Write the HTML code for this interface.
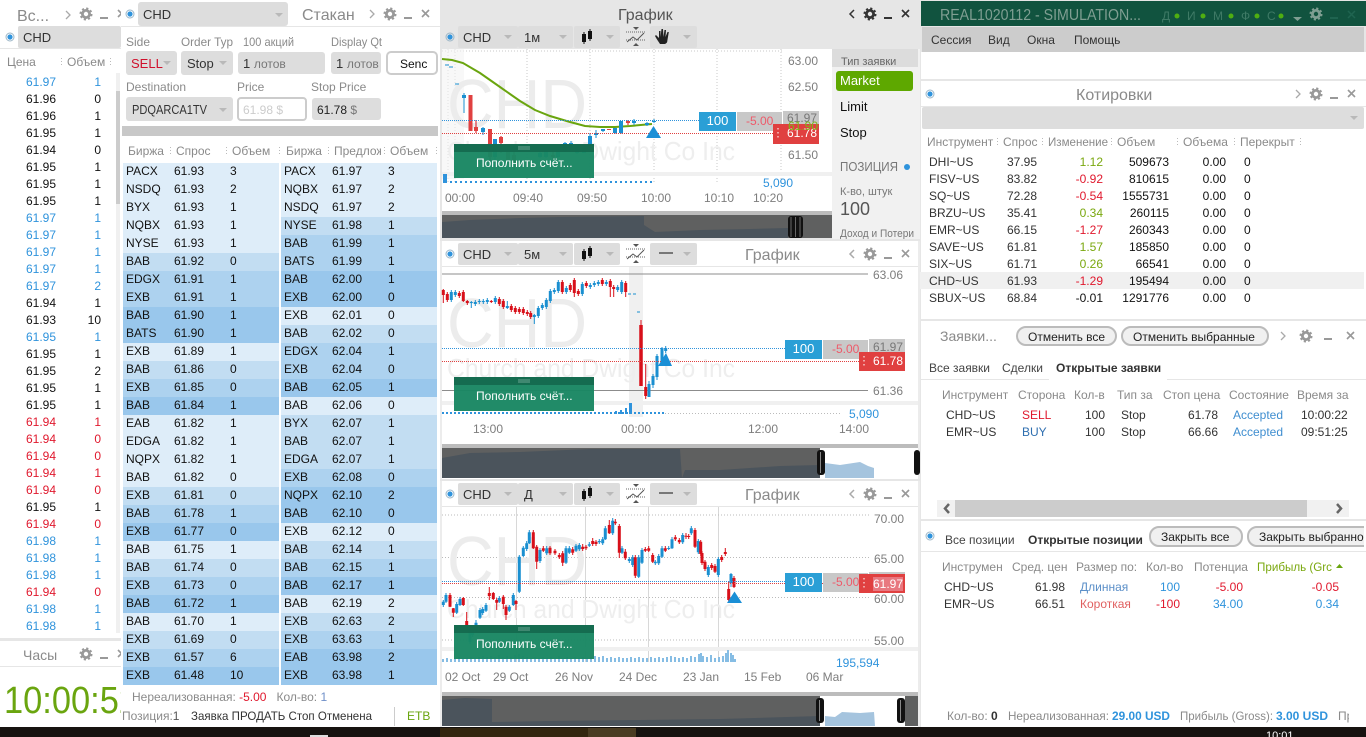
<!DOCTYPE html>
<html lang="ru"><head><meta charset="utf-8"><title>Terminal</title>
<style>
html,body{margin:0;padding:0;background:#e6e6e6;overflow:hidden}
svg{display:block}
text{font-family:"Liberation Sans","DejaVu Sans",sans-serif;font-size:12px;fill:#111}
.h text,text.h{fill:#8a8a8a}
.b text,text.b{fill:#2f93dc}
.r text,text.r{fill:#e0182d}
.k text{fill:#111}
.g text,text.g{fill:#6aa50f}
.e{text-anchor:end}
.t16{font-size:16px;fill:#8a8a8a}
.ax{font-size:12px;fill:#7d7d7d}
.wm1{font-size:70px;fill:#ececec}
.wm2{font-size:26px;fill:#eeeeee}
.w{fill:#fff}
.lb{fill:#fff;font-size:12px}
.pk{fill:#ee5a6a;font-size:12px}
</style></head><body>
<svg width="1366" height="737" viewBox="0 0 1366 737" xmlns="http://www.w3.org/2000/svg">
<defs>
<g id="gear"><circle r="3.6" fill="none" stroke="currentColor" stroke-width="2.8"/><circle r="5.4" fill="none" stroke="currentColor" stroke-width="2.2" stroke-dasharray="2.1 2.14"/></g>
<g id="ctl"><use href="#gear"/><rect x="14" y="3" width="8" height="2" fill="currentColor"/><path d="M32 -4l7 7M39 -4l-7 7" stroke="currentColor" stroke-width="1.6" fill="none"/></g>
<path id="arr" d="M0 0h8l-4 4z" fill="#b9b9b9"/>
<g id="radio"><circle r="4" fill="none" stroke="#9db7c8" stroke-width="1"/><circle r="2.6" fill="#2f93dc"/></g>
<g id="cnd"><path d="M0 -3V9M6 -6V6" stroke="#111" stroke-width="1"/><rect x="-2" y="-1" width="4" height="8" fill="#111"/><rect x="4" y="-4" width="4" height="8" fill="#111"/></g>
<g id="tool"><path d="M0 4h20M0 -4h20" stroke="#666" stroke-width="1" stroke-dasharray="1 1" fill="none"/><path d="M1 6l6 -5 4 3 7 -7" stroke="#555" fill="none"/><path d="M7 -9h6l-3 3zM7 10h6l-3 -3z" fill="#555"/></g>
<g id="banner"><rect width="140" height="34" fill="#1a8763" opacity=".97"/><rect width="140" height="8" fill="#156b50" opacity=".97"/><path d="M64 3h12M64 5h12" stroke="#6aa592" stroke-width="1"/><text x="22" y="23" class="w" style="fill:#fff">Пополнить счёт...</text></g>
</defs>

<!-- desktop strip -->
<rect y="727" width="1366" height="10" fill="#171310"/>
<rect x="440" y="728" width="150" height="9" fill="#33260f"/><rect x="588" y="728" width="48" height="9" fill="#4a3c22"/>
<rect x="310" y="735" width="18" height="2" fill="#ddd"/>
<text x="1266" y="739" style="fill:#fff;font-size:11px">10:01</text>

<!-- LEFT PANEL -->
<rect x="0" y="0" width="121" height="638" fill="#fff"/>
<rect x="0" y="48" width="121" height="1" fill="#e6e6e6"/>
<rect x="18" y="26" width="103" height="22" rx="2" fill="#ddd"/>
<use href="#radio" x="10" y="37"/>
<text x="17" y="21" class="t16">Вс...</text>
<path d="M66 11l4 4 -4 4" fill="none" stroke="#aaa" stroke-width="1.3"/>
<use href="#ctl" x="86" y="14" color="#999"/>
<text x="23" y="42" style="font-size:13px;fill:#333">CHD</text>
<g class="h"><text x="7" y="66">Цена</text><text x="67" y="66">Объем</text></g>
<path d="M61.500 58V66M110.500 58V66" stroke="#bbb" stroke-dasharray="1 2"/>
<rect x="116" y="73" width="4" height="560" fill="#f0f0f0"/><rect x="116" y="91" width="4" height="113" fill="#ccc"/>
<g class="b"><text x="26" y="86">61.97</text><text x="101" y="86" class="e">1</text></g>
<g class="k">
<text x="26" y="103">61.96</text><text x="101" y="103" class="e">0</text>
<text x="26" y="120">61.96</text><text x="101" y="120" class="e">1</text>
<text x="26" y="137">61.95</text><text x="101" y="137" class="e">1</text>
<text x="26" y="154">61.94</text><text x="101" y="154" class="e">0</text>
<text x="26" y="171">61.95</text><text x="101" y="171" class="e">1</text>
<text x="26" y="188">61.95</text><text x="101" y="188" class="e">1</text>
<text x="26" y="205">61.95</text><text x="101" y="205" class="e">1</text>
</g>
<g class="b">
<text x="26" y="222">61.97</text><text x="101" y="222" class="e">1</text>
<text x="26" y="239">61.97</text><text x="101" y="239" class="e">1</text>
<text x="26" y="256">61.97</text><text x="101" y="256" class="e">1</text>
<text x="26" y="273">61.97</text><text x="101" y="273" class="e">1</text>
<text x="26" y="290">61.97</text><text x="101" y="290" class="e">2</text>
</g>
<g class="k">
<text x="26" y="307">61.94</text><text x="101" y="307" class="e">1</text>
<text x="26" y="324">61.93</text><text x="101" y="324" class="e">10</text>
</g>
<g class="b"><text x="26" y="341">61.95</text><text x="101" y="341" class="e">1</text></g>
<g class="k">
<text x="26" y="358">61.95</text><text x="101" y="358" class="e">1</text>
<text x="26" y="375">61.95</text><text x="101" y="375" class="e">2</text>
<text x="26" y="392">61.95</text><text x="101" y="392" class="e">1</text>
<text x="26" y="409">61.95</text><text x="101" y="409" class="e">1</text>
</g>
<g class="r">
<text x="26" y="426">61.94</text><text x="101" y="426" class="e">1</text>
<text x="26" y="443">61.94</text><text x="101" y="443" class="e">0</text>
<text x="26" y="460">61.94</text><text x="101" y="460" class="e">0</text>
<text x="26" y="477">61.94</text><text x="101" y="477" class="e">1</text>
<text x="26" y="494">61.94</text><text x="101" y="494" class="e">0</text>
</g>
<g class="k"><text x="26" y="511">61.95</text><text x="101" y="511" class="e">1</text></g>
<g class="r"><text x="26" y="528">61.94</text><text x="101" y="528" class="e">0</text></g>
<g class="b">
<text x="26" y="545">61.98</text><text x="101" y="545" class="e">1</text>
<text x="26" y="562">61.98</text><text x="101" y="562" class="e">1</text>
<text x="26" y="579">61.98</text><text x="101" y="579" class="e">1</text>
</g>
<g class="r"><text x="26" y="596">61.94</text><text x="101" y="596" class="e">0</text></g>
<g class="b">
<text x="26" y="613">61.98</text><text x="101" y="613" class="e">1</text>
<text x="26" y="630">61.98</text><text x="101" y="630" class="e">1</text>
</g>
<!-- Clock -->
<rect x="0" y="641" width="121" height="86" fill="#fff"/>
<rect x="0" y="666" width="121" height="1" fill="#e6e6e6"/>
<text x="23" y="660" style="font-size:14px;fill:#8a8a8a">Часы</text>
<use href="#ctl" x="86" y="654" color="#999"/>
<text x="4" y="713" style="font-size:38px;fill:#6aa50f" textLength="134" lengthAdjust="spacingAndGlyphs">10:00:52</text>

<!-- ORDER BOOK PANEL -->
<rect x="121" y="0" width="319" height="727" fill="#fff"/>
<rect x="121" y="26" width="319" height="1" fill="#e6e6e6"/>
<rect x="138" y="2" width="150" height="24" rx="3" fill="#ddd"/>
<use href="#radio" x="130" y="14"/>
<text x="143" y="19" style="font-size:13px;fill:#333">CHD</text>
<use href="#arr" x="275" y="13"/>
<text x="302" y="20" class="t16">Стакан</text>
<path d="M370 10l4 4 -4 4" fill="none" stroke="#aaa" stroke-width="1.3"/>
<use href="#ctl" x="390" y="14" color="#999"/>
<g class="h">
<text x="126" y="46">Side</text><text x="181" y="46" textLength="52" lengthAdjust="spacingAndGlyphs">Order Typ</text><text x="243" y="46" textLength="51" lengthAdjust="spacingAndGlyphs">100 акций</text><text x="331" y="46" textLength="51" lengthAdjust="spacingAndGlyphs">Display Qt</text>
<text x="126" y="91">Destination</text><text x="237" y="91">Price</text><text x="311" y="91">Stop Price</text>
</g>
<rect x="126" y="51" width="51" height="24" rx="3" fill="#ddd"/><text x="131" y="68" style="font-size:13px;fill:#d0102c">SELL</text><use href="#arr" x="163" y="61"/>
<rect x="181" y="51" width="52" height="24" rx="3" fill="#ddd"/><text x="187" y="68" style="font-size:13px;fill:#333">Stop</text><use href="#arr" x="219" y="61"/>
<rect x="238" y="52" width="87" height="22" rx="3" fill="#ddd"/><text x="243" y="68" style="font-size:13px;fill:#333">1 <tspan style="fill:#777;font-size:12px">лотов</tspan></text>
<rect x="331" y="52" width="50" height="22" rx="3" fill="#ddd"/><text x="336" y="68" style="font-size:13px;fill:#333">1 <tspan style="fill:#777;font-size:12px">лотов</tspan></text>
<rect x="387" y="52" width="50" height="22" rx="4" fill="#fff" stroke="#ccc" stroke-width="2"/><text x="400" y="68" style="font-size:12px">Senc</text>
<rect x="126" y="97" width="107" height="24" rx="3" fill="#ddd"/><text x="132" y="114" style="font-size:13px;fill:#333" textLength="75" lengthAdjust="spacingAndGlyphs">PDQARCA1TV</text><use href="#arr" x="219" y="108"/>
<rect x="238" y="98" width="68" height="22" rx="3" fill="#fff" stroke="#ccc" stroke-width="2"/><text x="243" y="114" style="font-size:12px;fill:#ccc">61.98 $</text>
<rect x="312" y="98" width="69" height="22" rx="3" fill="#ddd"/><text x="317" y="114" style="font-size:12px;fill:#222">61.78 <tspan style="fill:#777">$</tspan></text>
<rect x="122" y="126" width="316" height="10" fill="#c8c8c8"/>
<g class="h"><text x="128" y="155">Биржа</text><text x="176" y="155">Спрос</text><text x="232" y="155">Объем</text><text x="286" y="155">Биржа</text><text x="334" y="155">Предлож</text><text x="390" y="155">Объем</text></g>
<rect x="381" y="145" width="5" height="14" fill="#fff"/>
<path d="M170.500 147V155M226.500 147V155M279.500 147V155M328.500 147V155M384.500 147V155M436.500 147V155" stroke="#bbb" stroke-dasharray="1 2"/>
<!-- bid stripes -->
<g fill="#deedf9"><rect x="123" y="163" width="156" height="90"/><rect x="123" y="343" width="156" height="18"/><rect x="123" y="415" width="156" height="72"/><rect x="123" y="541" width="156" height="18"/><rect x="123" y="613" width="156" height="18"/></g>
<g fill="#c2ddf2"><rect x="123" y="253" width="156" height="18"/><rect x="123" y="361" width="156" height="18"/><rect x="123" y="487" width="156" height="18"/><rect x="123" y="559" width="156" height="18"/><rect x="123" y="631" width="156" height="18"/></g>
<g fill="#add2ef"><rect x="123" y="271" width="156" height="36"/><rect x="123" y="379" width="156" height="18"/><rect x="123" y="505" width="156" height="18"/><rect x="123" y="577" width="156" height="18"/><rect x="123" y="649" width="156" height="18"/></g>
<g fill="#99c7ec"><rect x="123" y="307" width="156" height="36"/><rect x="123" y="397" width="156" height="18"/><rect x="123" y="523" width="156" height="18"/><rect x="123" y="595" width="156" height="18"/><rect x="123" y="667" width="156" height="18"/></g>
<!-- ask stripes -->
<g fill="#deedf9"><rect x="281" y="163" width="156" height="54"/><rect x="281" y="307" width="156" height="18"/><rect x="281" y="397" width="156" height="18"/><rect x="281" y="523" width="156" height="18"/><rect x="281" y="595" width="156" height="18"/></g>
<g fill="#c2ddf2"><rect x="281" y="217" width="156" height="18"/><rect x="281" y="325" width="156" height="18"/><rect x="281" y="415" width="156" height="54"/><rect x="281" y="541" width="156" height="18"/><rect x="281" y="613" width="156" height="18"/></g>
<g fill="#add2ef"><rect x="281" y="235" width="156" height="36"/><rect x="281" y="343" width="156" height="36"/><rect x="281" y="469" width="156" height="18"/><rect x="281" y="559" width="156" height="18"/><rect x="281" y="631" width="156" height="18"/></g>
<g fill="#99c7ec"><rect x="281" y="271" width="156" height="36"/><rect x="281" y="379" width="156" height="18"/><rect x="281" y="487" width="156" height="36"/><rect x="281" y="577" width="156" height="18"/><rect x="281" y="649" width="156" height="36"/></g>
<g>
<text y="175"><tspan x="126">PACX</tspan><tspan x="174">61.93</tspan><tspan x="230">3</tspan><tspan x="284">PACX</tspan><tspan x="332">61.97</tspan><tspan x="388">3</tspan></text>
<text y="193"><tspan x="126">NSDQ</tspan><tspan x="174">61.93</tspan><tspan x="230">2</tspan><tspan x="284">NQBX</tspan><tspan x="332">61.97</tspan><tspan x="388">2</tspan></text>
<text y="211"><tspan x="126">BYX</tspan><tspan x="174">61.93</tspan><tspan x="230">1</tspan><tspan x="284">NSDQ</tspan><tspan x="332">61.97</tspan><tspan x="388">2</tspan></text>
<text y="229"><tspan x="126">NQBX</tspan><tspan x="174">61.93</tspan><tspan x="230">1</tspan><tspan x="284">NYSE</tspan><tspan x="332">61.98</tspan><tspan x="388">1</tspan></text>
<text y="247"><tspan x="126">NYSE</tspan><tspan x="174">61.93</tspan><tspan x="230">1</tspan><tspan x="284">BAB</tspan><tspan x="332">61.99</tspan><tspan x="388">1</tspan></text>
<text y="265"><tspan x="126">BAB</tspan><tspan x="174">61.92</tspan><tspan x="230">0</tspan><tspan x="284">BATS</tspan><tspan x="332">61.99</tspan><tspan x="388">1</tspan></text>
<text y="283"><tspan x="126">EDGX</tspan><tspan x="174">61.91</tspan><tspan x="230">1</tspan><tspan x="284">BAB</tspan><tspan x="332">62.00</tspan><tspan x="388">1</tspan></text>
<text y="301"><tspan x="126">EXB</tspan><tspan x="174">61.91</tspan><tspan x="230">1</tspan><tspan x="284">EXB</tspan><tspan x="332">62.00</tspan><tspan x="388">0</tspan></text>
<text y="319"><tspan x="126">BAB</tspan><tspan x="174">61.90</tspan><tspan x="230">1</tspan><tspan x="284">EXB</tspan><tspan x="332">62.01</tspan><tspan x="388">0</tspan></text>
<text y="337"><tspan x="126">BATS</tspan><tspan x="174">61.90</tspan><tspan x="230">1</tspan><tspan x="284">BAB</tspan><tspan x="332">62.02</tspan><tspan x="388">0</tspan></text>
<text y="355"><tspan x="126">EXB</tspan><tspan x="174">61.89</tspan><tspan x="230">1</tspan><tspan x="284">EDGX</tspan><tspan x="332">62.04</tspan><tspan x="388">1</tspan></text>
<text y="373"><tspan x="126">BAB</tspan><tspan x="174">61.86</tspan><tspan x="230">0</tspan><tspan x="284">EXB</tspan><tspan x="332">62.04</tspan><tspan x="388">0</tspan></text>
<text y="391"><tspan x="126">EXB</tspan><tspan x="174">61.85</tspan><tspan x="230">0</tspan><tspan x="284">BAB</tspan><tspan x="332">62.05</tspan><tspan x="388">1</tspan></text>
<text y="409"><tspan x="126">BAB</tspan><tspan x="174">61.84</tspan><tspan x="230">1</tspan><tspan x="284">BAB</tspan><tspan x="332">62.06</tspan><tspan x="388">0</tspan></text>
<text y="427"><tspan x="126">EAB</tspan><tspan x="174">61.82</tspan><tspan x="230">1</tspan><tspan x="284">BYX</tspan><tspan x="332">62.07</tspan><tspan x="388">1</tspan></text>
<text y="445"><tspan x="126">EDGA</tspan><tspan x="174">61.82</tspan><tspan x="230">1</tspan><tspan x="284">BAB</tspan><tspan x="332">62.07</tspan><tspan x="388">1</tspan></text>
<text y="463"><tspan x="126">NQPX</tspan><tspan x="174">61.82</tspan><tspan x="230">1</tspan><tspan x="284">EDGA</tspan><tspan x="332">62.07</tspan><tspan x="388">1</tspan></text>
<text y="481"><tspan x="126">BAB</tspan><tspan x="174">61.82</tspan><tspan x="230">0</tspan><tspan x="284">EXB</tspan><tspan x="332">62.08</tspan><tspan x="388">0</tspan></text>
<text y="499"><tspan x="126">EXB</tspan><tspan x="174">61.81</tspan><tspan x="230">0</tspan><tspan x="284">NQPX</tspan><tspan x="332">62.10</tspan><tspan x="388">2</tspan></text>
<text y="517"><tspan x="126">BAB</tspan><tspan x="174">61.78</tspan><tspan x="230">1</tspan><tspan x="284">BAB</tspan><tspan x="332">62.10</tspan><tspan x="388">0</tspan></text>
<text y="535"><tspan x="126">EXB</tspan><tspan x="174">61.77</tspan><tspan x="230">0</tspan><tspan x="284">EXB</tspan><tspan x="332">62.12</tspan><tspan x="388">0</tspan></text>
<text y="553"><tspan x="126">BAB</tspan><tspan x="174">61.75</tspan><tspan x="230">1</tspan><tspan x="284">BAB</tspan><tspan x="332">62.14</tspan><tspan x="388">1</tspan></text>
<text y="571"><tspan x="126">BAB</tspan><tspan x="174">61.74</tspan><tspan x="230">0</tspan><tspan x="284">BAB</tspan><tspan x="332">62.15</tspan><tspan x="388">1</tspan></text>
<text y="589"><tspan x="126">EXB</tspan><tspan x="174">61.73</tspan><tspan x="230">0</tspan><tspan x="284">BAB</tspan><tspan x="332">62.17</tspan><tspan x="388">1</tspan></text>
<text y="607"><tspan x="126">BAB</tspan><tspan x="174">61.72</tspan><tspan x="230">1</tspan><tspan x="284">BAB</tspan><tspan x="332">62.19</tspan><tspan x="388">2</tspan></text>
<text y="625"><tspan x="126">BAB</tspan><tspan x="174">61.70</tspan><tspan x="230">1</tspan><tspan x="284">EXB</tspan><tspan x="332">62.63</tspan><tspan x="388">2</tspan></text>
<text y="643"><tspan x="126">EXB</tspan><tspan x="174">61.69</tspan><tspan x="230">0</tspan><tspan x="284">EXB</tspan><tspan x="332">63.63</tspan><tspan x="388">1</tspan></text>
<text y="661"><tspan x="126">EXB</tspan><tspan x="174">61.57</tspan><tspan x="230">6</tspan><tspan x="284">EAB</tspan><tspan x="332">63.98</tspan><tspan x="388">2</tspan></text>
<text y="679"><tspan x="126">EXB</tspan><tspan x="174">61.48</tspan><tspan x="230">10</tspan><tspan x="284">EXB</tspan><tspan x="332">63.98</tspan><tspan x="388">1</tspan></text>
</g>
<text x="132" y="701" class="h">Нереализованная: <tspan style="fill:#e0182d">-5.00</tspan><tspan dx="10">Кол-во: </tspan><tspan style="fill:#6f8fc8">1</tspan></text>
<text x="122" y="720" class="h">Позиция:<tspan style="fill:#555">1</tspan></text>
<text x="191" y="720" style="fill:#333" textLength="181" lengthAdjust="spacingAndGlyphs">Заявка ПРОДАТЬ Стоп Отменена</text>
<rect x="394" y="707" width="1" height="19" fill="#ccc"/>
<text x="407" y="720" class="g">ETB</text>

<!-- CHART 1 -->
<rect x="440" y="0" width="480" height="241" fill="#e6e6e6"/>
<rect x="442" y="49" width="390" height="162" fill="#fff"/>
<text x="618" y="20" style="font-size:16px;fill:#555">График</text>
<path d="M854 10l-4 4 4 4" fill="none" stroke="#333" stroke-width="1.5"/>
<use href="#ctl" x="870" y="14" color="#333"/>
<use href="#radio" x="450" y="37"/>
<rect x="458" y="26" width="60" height="22" rx="2" fill="#ddd"/><rect x="518" y="26" width="55" height="22" rx="2" fill="#ddd"/><rect x="574" y="26" width="46" height="22" rx="2" fill="#ddd"/><rect x="650" y="26" width="47" height="22" rx="2" fill="#ddd"/>
<text x="463" y="42" style="font-size:13px;fill:#333">CHD</text><use href="#arr" x="504" y="35"/>
<text x="524" y="42" style="font-size:13px;fill:#333">1м</text><use href="#arr" x="559" y="35"/>
<use href="#cnd" x="584" y="35"/><use href="#arr" x="606" y="35"/>
<use href="#tool" x="626" y="36"/>
<path d="M660 44c-2-3-4-6-5-8l1-1 3 3v-7h1.500v6l1-8h1.500l.5 8 1-7h1.500l-.5 7 2-5h1.300l-1.500 9c0 2-2 3-3 3z" fill="#222"/>
<use href="#arr" x="683" y="35"/>
<g stroke="#c9c9c9" stroke-width="1" stroke-dasharray="1 2" fill="none">
<path d="M442 51H782M527 49V182M590 49V182M654 49V182M717 49V182M781 49V182M448 49V182M455 49V182"/>
</g>
<rect x="442" y="49" width="22" height="130" fill="#f3f3f3" opacity=".6"/>
<text x="447" y="128" class="wm1" textLength="140" lengthAdjust="spacingAndGlyphs">CHD</text>
<text x="447" y="160" class="wm2" textLength="288" lengthAdjust="spacingAndGlyphs">Church and Dwight Co Inc</text>
<rect x="442" y="172" width="390" height="4" fill="#f0f0f0"/>
<path d="M442 59L452 60L463 63L480 73L500 87L520 101L535 110L550 116L570 122L585 126L600 127L615 127L630 126L652 124" fill="none" stroke="#6aa50f" stroke-width="2"/>
<g stroke="#1a8fd0" fill="none">
<path d="M464 93V113M483 127V135M495 139V160M540 152V158M546 150V158M558 149V158M565 142V152M571 141V147M577 145V154M590 133V146M596 130V138M603 129V132M615 128V134M621 121V134M634 119V125M647 122V126M654 119V123M445 65h4M449 67h4M455 84h4"/>
<path d="M464 95V98M483 128V132M495 139V157M540 153V157M546 150V157M558 149V157M565 143V151M571 143V146M577 145V153M584 148V153M590 136V145M596 133V135M603 129V131M615 128V133M621 121V133M634 121V123M647 123V125M654 121V122" stroke-width="4"/>
</g>
<g stroke="#d8101a" fill="none">
<path d="M476 120V133M490 129V165M501 136V153M508 145V165M514 152V170M553 148V160M628 120V125"/>
<path d="M470.500 95V131M476 127V131M490 129V157M501 137V143M508 145V160M514 155V165M553 155V157M609 129V130M628 121V123" stroke-width="4" stroke="#e04040"/>
</g>
<path d="M442 120.500H700" stroke="#2f93dc" stroke-dasharray="1 1"/><path d="M442 133.500H773" stroke="#e04040" stroke-dasharray="1 1"/>
<path d="M445 182H655" stroke="#2f93dc" stroke-width="2" stroke-dasharray="2 3"/><rect x="443" y="174" width="4" height="9" fill="#2f93dc"/>
<path d="M646 138L653.500 126L661 138z" fill="#1a8fd6"/>
<use href="#banner" x="454" y="144"/>
<text x="788" y="65" class="ax">63.00</text><text x="788" y="91" class="ax">62.50</text><text x="788" y="159" class="ax">61.50</text>
<rect x="699" y="112" width="37" height="19" fill="#2a9fd6"/><text x="717.500" y="125" text-anchor="middle" class="lb" style="font-size:13px">100</text>
<rect x="737" y="112" width="45" height="19" fill="#c8c8c8"/><text x="746" y="125" class="pk">-5.00</text>
<rect x="783" y="111" width="36" height="19" fill="#c8c8c8"/><text x="787" y="122" style="fill:#777;font-size:12px">61.97</text>
<rect x="773" y="124" width="46" height="20" fill="#e04040"/><path d="M778 128v1.500M778 132v1.500M778 136v1.500" stroke="#fff" stroke-width="1.500" opacity=".7"/>
<text x="787" y="137" class="lb">61.78</text><text x="788" y="130" style="fill:#7cb518;font-size:12px">61.90</text>
<text x="763" y="187" class="b">5,090</text>
<text x="445" y="202" class="ax">00:00</text><text x="513" y="202" class="ax">09:40</text><text x="577" y="202" class="ax">09:50</text><text x="641" y="202" class="ax">10:00</text><text x="704" y="202" class="ax">10:10</text><text x="753" y="202" class="ax">10:20</text>
<rect x="442" y="211" width="390" height="4" fill="#bcbcbc"/><rect x="442" y="215" width="390" height="23" fill="#5f6060"/>
<path d="M442 238V222L470 220L520 218L560 217L644 216V238z" fill="#4b545c"/>
<path d="M644 238V225L655 232L700 230L750 229L788 228V238z" fill="#4b545c"/>
<rect x="788" y="216" width="15" height="22" rx="3" fill="#111"/><path d="M791 217V237M795.500 217V237M800 217V237" stroke="#666"/>
<!-- sidebar -->
<rect x="832" y="49" width="88" height="190" fill="#f1f1f1"/><rect x="832" y="49" width="86" height="18" fill="#dcdcdc"/>
<text x="841" y="65" style="font-size:11px;fill:#666">Тип заявки</text>
<rect x="836" y="71" width="77" height="20" rx="3" fill="#5ea800"/><text x="840" y="85" style="font-size:13px;fill:#fff">Market</text>
<text x="840" y="111" style="font-size:13px">Limit</text><text x="840" y="137" style="font-size:13px">Stop</text>
<text x="840" y="171" style="font-size:13px;fill:#777" textLength="58" lengthAdjust="spacingAndGlyphs">ПОЗИЦИЯ</text><circle cx="907" cy="167" r="3" fill="#2f93dc"/>
<text x="840" y="195" style="font-size:11px;fill:#777">К-во, штук</text>
<text x="840" y="215" style="font-size:18px;fill:#555">100</text>
<text x="840" y="237" style="font-size:11px;fill:#777" textLength="74" lengthAdjust="spacingAndGlyphs">Доход и Потери</text>

<!-- CHART 2 -->
<rect x="440" y="241" width="480" height="240" fill="#fff"/>
<rect x="440" y="239" width="480" height="2" fill="#e6e6e6"/>
<rect x="440" y="266" width="480" height="1" fill="#e6e6e6"/>
<rect x="440" y="241" width="2" height="240" fill="#ececec"/><rect x="918" y="241" width="2" height="240" fill="#ececec"/>
<use href="#radio" x="450" y="254"/>
<rect x="458" y="243" width="60" height="22" rx="2" fill="#ddd"/><rect x="518" y="243" width="55" height="22" rx="2" fill="#ddd"/><rect x="574" y="243" width="46" height="22" rx="2" fill="#ddd"/><rect x="650" y="243" width="47" height="22" rx="2" fill="#ddd"/>
<text x="463" y="259" style="font-size:13px;fill:#333">CHD</text><use href="#arr" x="504" y="252"/>
<text x="524" y="259" style="font-size:13px;fill:#333">5м</text><use href="#arr" x="559" y="252"/>
<use href="#cnd" x="584" y="252"/><use href="#arr" x="606" y="252"/>
<use href="#tool" x="626" y="253"/>
<rect x="659" y="252" width="14" height="2" fill="#777"/><use href="#arr" x="683" y="252"/>
<text x="745" y="260" class="t16">График</text>
<path d="M854 250l-4 4 4 4" fill="none" stroke="#aaa" stroke-width="1.500"/>
<use href="#ctl" x="870" y="254" color="#999"/>
<rect x="629" y="267" width="14" height="150" fill="#f0f0f0"/>
<text x="447" y="347" class="wm1" textLength="140" lengthAdjust="spacingAndGlyphs">CHD</text>
<text x="447" y="377" class="wm2" textLength="288" lengthAdjust="spacingAndGlyphs">Church and Dwight Co Inc</text>
<rect x="442" y="401" width="476" height="4" fill="#f0f0f0"/>
<path d="M442 274H868M442 390.500H868" stroke="#8c8c8c" stroke-width="1"/>
<g fill="none" stroke="#1a8fd0">
<path d="M451.300 290V302M455.300 290V297M471.300 301V308M475.300 300V306M479.300 299V304M483.300 299V304M487.300 298V304M495.300 296V304M507.300 301V309M534.300 314V324M538.300 306V318M542.300 303V310M546.300 298V309M550.300 289V303M554.300 288V294M558.300 280V293M566.300 286V294M582.300 282V296M590.300 283V289M594.300 281V287M598.300 280V286M606.300 280V286M617.700 285V292M621.700 280V294M628 294h3M633 294h3M637 312h3"/>
<path d="M451.300 292V300M455.300 292V295M471.300 302V303M475.300 302V304M479.300 301V302M483.300 301V302M487.300 300V302M495.300 298V302M507.300 306V308M534.300 315V317M538.300 308V316M542.300 305V308M546.300 300V307M550.300 291V301M554.300 290V292M558.300 282V291M566.300 288V292M582.300 284V294M590.300 285V287M594.300 283V285M598.300 282V284M606.300 282V284M617.700 287V290M621.700 282V292" stroke-width="3"/>
<path d="M649 397V384M653 385V376M657 377V356M662 363V348M665.700 351V348" stroke-width="3"/><path d="M649 397V381M653 388V374M657 380V354M662 365V347M665.700 353V346"/>
</g>
<g fill="none" stroke="#d8101a">
<path d="M443.300 289V303M447.300 292V302M459.300 291V298M463.300 290V302M467.300 300V305M491.300 300V303M499.300 297V306M503.300 299V309M511.300 304V312M515.300 306V314M519.300 307V314M523.300 307V315M527.300 310V316M530.700 311V319M562.300 280V294M570.300 283V292M574.300 278V297M578.300 289V296M586.300 281V288M602.300 278V286M610.300 279V297M613.700 285V297M625.700 281V297"/>
<path d="M443.300 290V295M447.300 294V300M459.300 293V296M463.300 292V301M467.300 301V303M491.300 301V302M499.300 299V304M503.300 301V307M511.300 306V310M515.300 308V312M519.300 309V312M523.300 309V313M527.300 312V314M530.700 313V317M562.300 282V292M570.300 285V290M574.300 280V293M578.300 291V294M586.300 283V286M602.300 280V284M610.300 281V287M613.700 287V289M625.700 283V292" stroke-width="3"/>
<path d="M641 320V386"/><path d="M641 325V386" stroke-width="3.500"/>
<path d="M645.700 364V399"/><path d="M645.700 387V396" stroke-width="3"/>
</g>
<path d="M442 348.500H785" stroke="#2f93dc" stroke-dasharray="1 1"/><path d="M442 361.500H859" stroke="#e04040" stroke-dasharray="1 1"/>
<path d="M442 413H665" stroke="#2f93dc" stroke-width="2" stroke-dasharray="2 2"/><path d="M665 413.500H840" stroke="#bbb" stroke-dasharray="1 2"/>
<path d="M629 403h3v11h-3zM615 411h2v3h-2zM620 410h2v4h-2zM625 408h2v6h-2z" fill="#2f93dc"/>
<path d="M658 366L666 353L672 366z" fill="#1a8fd6"/>
<use href="#banner" x="454" y="377"/>
<text x="873" y="279" class="ax">63.06</text><text x="873" y="395" class="ax">61.36</text>
<rect x="785" y="340" width="37" height="19" fill="#2a9fd6"/><text x="803.500" y="353" text-anchor="middle" class="lb" style="font-size:13px">100</text>
<rect x="823" y="340" width="45" height="19" fill="#c8c8c8"/><text x="832" y="353" class="pk">-5.00</text>
<rect x="869" y="339" width="36" height="19" fill="#c8c8c8"/><text x="873" y="351" style="fill:#777;font-size:12px">61.97</text>
<rect x="859" y="352" width="46" height="19" fill="#e04040"/><path d="M864 356v1.500M864 360v1.500M864 364v1.500" stroke="#fff" stroke-width="1.500" opacity=".7"/>
<text x="873" y="365" class="lb">61.78</text>
<text x="849" y="418" class="b">5,090</text>
<text x="473" y="433" class="ax">13:00</text><text x="621" y="433" class="ax">00:00</text><text x="748" y="433" class="ax">12:00</text><text x="839" y="433" class="ax">14:00</text>
<rect x="442" y="444" width="476" height="4" fill="#bcbcbc"/>
<rect x="442" y="448" width="378" height="30" fill="#5f6060"/>
<path d="M442 478V458L470 453L520 452L590 449L680 449L682 478z" fill="#4b545c"/>
<path d="M682 478L685 470L720 470L780 466L820 465V478z" fill="#4b545c"/>
<path d="M825 463L840 465L860 462L868 466L874 468V478H825z" fill="#a5c4de"/>
<rect x="817" y="450" width="8" height="25" rx="3" fill="#111"/><path d="M820.500 452V473" stroke="#888"/>
<rect x="914" y="450" width="6" height="25" rx="3" fill="#111"/>

<!-- CHART 3 -->
<rect x="440" y="481" width="480" height="246" fill="#fff"/>
<rect x="440" y="479" width="480" height="2" fill="#e6e6e6"/>
<rect x="440" y="506" width="480" height="1" fill="#e6e6e6"/>
<rect x="440" y="481" width="2" height="246" fill="#ececec"/><rect x="918" y="481" width="2" height="246" fill="#ececec"/>
<use href="#radio" x="450" y="494"/>
<rect x="458" y="483" width="60" height="22" rx="2" fill="#ddd"/><rect x="518" y="483" width="55" height="22" rx="2" fill="#ddd"/><rect x="574" y="483" width="46" height="22" rx="2" fill="#ddd"/><rect x="650" y="483" width="47" height="22" rx="2" fill="#ddd"/>
<text x="463" y="499" style="font-size:13px;fill:#333">CHD</text><use href="#arr" x="504" y="492"/>
<text x="524" y="499" style="font-size:13px;fill:#333">Д</text><use href="#arr" x="559" y="492"/>
<use href="#cnd" x="584" y="492"/><use href="#arr" x="606" y="492"/>
<use href="#tool" x="626" y="493"/>
<rect x="659" y="492" width="14" height="2" fill="#777"/><use href="#arr" x="683" y="492"/>
<text x="745" y="500" class="t16">График</text>
<path d="M854 490l-4 4 4 4" fill="none" stroke="#aaa" stroke-width="1.500"/>
<use href="#ctl" x="870" y="494" color="#999"/>
<g stroke="#d8d8d8" fill="none"><path d="M516.500 507V662M585.500 507V662M648.500 507V662M718.500 507V662"/></g>
<path d="M442 515H870M442 557.500H870M442 597.500H870M442 640H870" stroke="#bbb" stroke-dasharray="1 2" fill="none"/>
<text x="447" y="585" class="wm1" textLength="140" lengthAdjust="spacingAndGlyphs">CHD</text>
<text x="447" y="618" class="wm2" textLength="288" lengthAdjust="spacingAndGlyphs">Church and Dwight Co Inc</text>
<rect x="442" y="647" width="476" height="4" fill="#f0f0f0"/>
<g fill="none" stroke="#1a8fd0">
<path d="M443.300 600V607M446 593V603M456.700 602V614M460 597V606M470 630V644M472.700 627V637M476 620V632M480 608V619M482.700 607V615M486 603V612M499.300 596V603M509.300 605V612M513.300 593V606M519.300 555V593M523.300 546V557M526.700 541V551M529.300 530V544M540 548V563M546.700 546V555M566 546V564M569.300 546V554M576 544V552M579.300 543V551M589.300 542V547M599.300 539V544M602.700 537V545M605.300 526V540M612.700 518V535M622 546V554M629.300 557V563M632.700 555V567M638.700 555V578M642 548V564M655.300 560V565M658.700 554V565M662 546V558M668.700 546V550M672 537V549M682.700 533V544M691.300 526V535M698.300 539V554M708.300 565V577M718.300 557V577M731 573V587"/>
<path d="M443.300 601.700V605M446 595V601.700M456.700 604V612.700M460 599V605M470 630V641.700M472.700 629V635M476 622.700V630.700M480 610V617.700M482.700 609V613M486 605V610.700M499.300 598V601.700M509.300 606.700V610.700M513.300 595V605M519.300 556.700V591.700M523.300 547.700V556M526.700 543.300V549M529.300 532.300V543.300M540 550V561M546.700 548.300V553.300M566 548.300V562.700M569.300 548.300V552.700M576 545.700V550.700M579.300 545V549.300M589.300 544.300V545.700M599.300 541V542.300M602.700 539.300V543.300M605.300 528.300V539.300M612.700 520.700V533.300M622 548.300V552.700M629.300 559V561M632.700 557.300V565M638.700 557.300V576.700M642 550V562.700M655.300 561.700V563.300M658.700 556V563.300M662 548.300V556.700M668.700 548V549M672 539.300V548.300M682.700 535V542.300M691.300 528.300V533.300M698.300 541V552.300M708.300 567V575M718.300 559V575M731 574V583" stroke-width="3"/>
</g>
<g fill="none" stroke="#d8101a">
<path d="M450 593V607M453.300 608V617M463.300 597V606M466.700 612V633M489.300 587V600M493.300 592V600M496.700 598V610M503.300 595V609M506 605V620M516 600V610M533.300 530V549M536.700 545V569M543.300 546V552M550 546V555M555 549V555M559.300 553V559M562.700 551V566M572.700 547V555M582.700 544V551M586 545V550M592.700 538V546M596 540V546M609.300 520V534M615.300 519V525M619.300 524V558M625.300 549V560M635.300 555V578M645.300 547V552M648.700 546V552M652.700 553V563M665.300 546V552M675.300 535V541M679.300 538V544M686 533V539M688.700 534V539M695 528V548M700.700 540V556M702 551V565M705 560V571M711.700 563V570M715 564V573M721.700 555V562M725.300 548V556M728.700 581V601M734 576V588"/>
<path d="M450 595V606.700M453.300 608.300V612.700M463.300 598V605M466.700 621V631.700M489.300 593V596M493.300 593V599M496.700 600V602.700M503.300 596.700V604M506 606.700V615M516 601V604M533.300 532.300V548.300M536.700 546.700V561.700M543.300 548.300V550.700M550 547.700V553.300M555 550.700V553.300M559.300 555V557.300M562.700 553.300V562.700M572.700 549.300V552.700M582.700 546.700V549M586 546.700V548.300M592.700 541V544M596 541.700V544M609.300 525V533.300M615.300 521.700V523.300M619.300 526V552.700M625.300 551.700V558.300M635.300 557.300V575.700M645.300 549V550.700M648.700 548.300V550.700M652.700 555V561.700M665.300 548.300V550.700M675.300 537.300V539.300M679.300 540V542.300M686 535.700V536.700M688.700 536V537M695 530V546.700M700.700 541.700V554M702 553V563M705 561.700V569M711.700 565V568M715 566V571.700M721.700 557V560M725.300 552V554M728.700 589V600M734 578V587" stroke-width="3"/>
</g>
<path d="M442 581.500H785" stroke="#2f93dc" stroke-dasharray="1 1"/><path d="M442 583.500H859" stroke="#e04040" stroke-dasharray="1 1"/>
<path d="M727 603L734.500 591.500L742 603z" fill="#1a8fd6"/>
<path d="M443 662V659M447 662V658M451 662V659M455 662V658M459 662V657M463 662V658M467 662V658M471 662V657M475 662V658M479 662V657M483 662V656M487 662V657M491 662V656M495 662V657M499 662V655M503 662V657M507 662V656M511 662V657M515 662V655M519 662V654M523 662V656M527 662V657M531 662V658M535 662V657M539 662V658M543 662V657M547 662V658M551 662V657M555 662V658M559 662V656M563 662V658M567 662V657M571 662V658M575 662V657M579 662V658M583 662V657M587 662V658M591 662V657M595 662V656M599 662V657M603 662V656M607 662V658M611 662V657M615 662V658M619 662V657M623 662V658M627 662V658M631 662V657M635 662V658M639 662V657M643 662V658M647 662V658M651 662V657M655 662V658M659 662V657M663 662V658M667 662V657M671 662V656M675 662V657M679 662V658M683 662V657M687 662V658M691 662V656M695 662V657M699 662V654M701 662V653M703 662V656M707 662V657M711 662V655M715 662V658M719 662V657M723 662V656M726 662V653M728 662V650M731 662V653M733 662V655M735 662V659" stroke="#86bde4" stroke-width="2"/>
<use href="#banner" x="454" y="625"/>
<text x="874" y="523" class="ax">70.00</text><text x="874" y="563" class="ax">65.00</text><text x="874" y="603" class="ax">60.00</text><text x="874" y="645" class="ax">55.00</text>
<rect x="785" y="573" width="37" height="19" fill="#2a9fd6"/><text x="803.500" y="586" text-anchor="middle" class="lb" style="font-size:13px">100</text>
<rect x="823" y="573" width="45" height="19" fill="#c8c8c8"/><text x="832" y="586" class="pk">-5.00</text>
<rect x="869" y="572" width="36" height="19" fill="#c8c8c8"/>
<rect x="859" y="574" width="46" height="19" fill="#e04040"/><rect x="873" y="577" width="30" height="14" fill="#e87880"/><path d="M864 578v1.500M864 582v1.500M864 586v1.500" stroke="#fff" stroke-width="1.500" opacity=".7"/>
<text x="873" y="588" class="lb">61.97</text>
<text x="836" y="667" class="b">195,594</text>
<text x="445" y="681" class="ax">02 Oct</text><text x="493" y="681" class="ax">29 Oct</text><text x="555" y="681" class="ax">26 Nov</text><text x="619" y="681" class="ax">24 Dec</text><text x="683" y="681" class="ax">23 Jan</text><text x="744" y="681" class="ax">15 Feb</text><text x="806" y="681" class="ax">06 Mar</text>
<rect x="442" y="692" width="476" height="4" fill="#bcbcbc"/>
<rect x="442" y="696" width="378" height="30" fill="#5f6060"/>
<path d="M442 726V700L465 698L492 699V726z" fill="#4b545c"/>
<path d="M492 726V722L550 721L640 720L720 719L820 716V726z" fill="#4b545c"/>
<rect x="905" y="696" width="13" height="30" fill="#5f6060"/>
<path d="M825 716L835 717L842 712L860 713L874 712L875 726H825z" fill="#a5c4de"/>
<rect x="816" y="698" width="8" height="25" rx="3" fill="#111"/><path d="M819.500 700V721" stroke="#888"/>
<rect x="897" y="698" width="8" height="25" rx="3" fill="#111"/><path d="M900.500 700V721" stroke="#888"/>

<!-- RIGHT COLUMN -->
<rect x="920" y="0" width="446" height="727" fill="#e6e6e6"/>
<rect x="921" y="1" width="445" height="25" fill="#11533f"/>
<text x="940" y="20" style="font-size:16px;fill:#7f9e92" textLength="201" lengthAdjust="spacingAndGlyphs">REAL1020112 - SIMULATION...</text>
<g><text x="1162" y="20" style="fill:#3f7a66">Д</text><text x="1187" y="20" style="fill:#3f7a66">И</text><text x="1213" y="20" style="fill:#3f7a66">М</text><text x="1241" y="20" style="fill:#3f7a66">Ф</text><text x="1267" y="20" style="fill:#3f7a66">С</text></g>
<g fill="#4fae12"><circle cx="1177" cy="16" r="2.500"/><circle cx="1203" cy="16" r="2.500"/><circle cx="1231" cy="16" r="2.500"/><circle cx="1257" cy="16" r="2.500"/><circle cx="1281" cy="16" r="2.500"/></g>
<path d="M1293 17h9l-4.500 4z" fill="#7f9e92"/>
<use href="#gear" x="1316" y="14" color="#7f9e92"/>
<rect x="1330" y="17" width="8" height="2" fill="#1f6450"/><path d="M1348 11l7 7M1355 11l-7 7" stroke="#1f6450" stroke-width="1.500"/>
<rect x="922" y="27" width="442" height="25" fill="#ccc"/>
<g><text x="931" y="44" style="fill:#333">Сессия</text><text x="988" y="44" style="fill:#333">Вид</text><text x="1027" y="44" style="fill:#333">Окна</text><text x="1074" y="44" style="fill:#333">Помощь</text></g>
<rect x="921" y="52" width="445" height="27" fill="#fff"/>
<!-- Quotes -->
<rect x="921" y="81" width="445" height="238" fill="#fff"/>
<rect x="921" y="106" width="445" height="1" fill="#e6e6e6"/>
<use href="#radio" x="930" y="94"/>
<text x="1076" y="100" class="t16">Котировки</text>
<path d="M1296 90l4 4 -4 4" fill="none" stroke="#aaa" stroke-width="1.300"/>
<use href="#ctl" x="1316" y="94" color="#999"/>
<rect x="922" y="107" width="442" height="22" rx="2" fill="#ddd"/><use href="#arr" x="1350" y="116"/>
<g class="h"><text x="927" y="146">Инструмент</text><text x="1003" y="146">Спрос</text><text x="1048" y="146" textLength="60" lengthAdjust="spacingAndGlyphs">Изменение</text><text x="1117" y="146">Объем</text><text x="1183" y="146">Объема</text><text x="1240" y="146">Перекрыт</text></g>
<path d="M997.500 138V146M1042.500 138V146M1111.500 138V146M1177.500 138V146M1234.500 138V146M1300.500 138V146" stroke="#bbb" stroke-dasharray="1 2"/>
<rect x="920" y="272" width="444" height="17" fill="#f0f0f0"/>
<g>
<text y="166" style="fill:#333"><tspan x="929">DHI~US</tspan><tspan x="1007">37.95</tspan></text>
<text y="183" style="fill:#333"><tspan x="929">FISV~US</tspan><tspan x="1007">83.82</tspan></text>
<text y="200" style="fill:#333"><tspan x="929">SQ~US</tspan><tspan x="1007">72.28</tspan></text>
<text y="217" style="fill:#333"><tspan x="929">BRZU~US</tspan><tspan x="1007">35.41</tspan></text>
<text y="234" style="fill:#333"><tspan x="929">EMR~US</tspan><tspan x="1007">66.15</tspan></text>
<text y="251" style="fill:#333"><tspan x="929">SAVE~US</tspan><tspan x="1007">61.81</tspan></text>
<text y="268" style="fill:#333"><tspan x="929">SIX~US</tspan><tspan x="1007">61.71</tspan></text>
<text y="285" style="fill:#333"><tspan x="929">CHD~US</tspan><tspan x="1007">61.93</tspan></text>
<text y="302" style="fill:#333"><tspan x="929">SBUX~US</tspan><tspan x="1007">68.84</tspan></text>
</g>
<g text-anchor="end">
<text x="1103" y="166" class="g" style="fill:#7aa80f">1.12</text><text x="1103" y="183" class="r">-0.92</text><text x="1103" y="200" class="r">-0.54</text><text x="1103" y="217" class="g" style="fill:#7aa80f">0.34</text><text x="1103" y="234" class="r">-1.27</text><text x="1103" y="251" class="g" style="fill:#7aa80f">1.57</text><text x="1103" y="268" class="g" style="fill:#7aa80f">0.26</text><text x="1103" y="285" class="r">-1.29</text><text x="1103" y="302">-0.01</text>
<text x="1169" y="166">509673</text><text x="1169" y="183">810615</text><text x="1169" y="200">1555731</text><text x="1169" y="217">260115</text><text x="1169" y="234">260343</text><text x="1169" y="251">185850</text><text x="1169" y="268">66541</text><text x="1169" y="285">195494</text><text x="1169" y="302">1291776</text>
<text x="1226" y="166">0.00</text><text x="1226" y="183">0.00</text><text x="1226" y="200">0.00</text><text x="1226" y="217">0.00</text><text x="1226" y="234">0.00</text><text x="1226" y="251">0.00</text><text x="1226" y="268">0.00</text><text x="1226" y="285">0.00</text><text x="1226" y="302">0.00</text>
</g>
<g><text x="1244" y="166">0</text><text x="1244" y="183">0</text><text x="1244" y="200">0</text><text x="1244" y="217">0</text><text x="1244" y="234">0</text><text x="1244" y="251">0</text><text x="1244" y="268">0</text><text x="1244" y="285">0</text><text x="1244" y="302">0</text></g>
<!-- Orders -->
<rect x="921" y="321" width="445" height="198" fill="#fff"/>
<text x="940" y="341" style="font-size:14px;fill:#8a8a8a">Заявки...</text>
<rect x="1017" y="327" width="99" height="18" rx="9" fill="#f0f0f0" stroke="#bbb" stroke-width="2"/><text x="1028" y="341" style="fill:#222">Отменить все</text>
<rect x="1122" y="327" width="146" height="18" rx="9" fill="#f0f0f0" stroke="#bbb" stroke-width="2"/><text x="1133" y="341" style="fill:#222">Отменить выбранные</text>
<path d="M1281 332l4 4 -4 4" fill="none" stroke="#aaa" stroke-width="1.300"/>
<use href="#gear" x="1306" y="336" color="#999"/>
<rect x="1324" y="338" width="8" height="2" fill="#999"/><path d="M1347 332l7 7M1354 332l-7 7" stroke="#999" stroke-width="1.600"/>
<text x="929" y="372" style="fill:#444">Все заявки</text><text x="1002" y="372" style="fill:#444">Сделки</text><text x="1056" y="372" style="font-weight:700;fill:#333">Открытые заявки</text>
<path d="M921 379.500H1049M1167 379.500H1366" stroke="#e6e6e6"/>
<g class="h"><text x="942" y="399">Инструмент</text><text x="1018" y="399">Сторона</text><text x="1074" y="399">Кол-в</text><text x="1117" y="399">Тип за</text><text x="1163" y="399">Стоп цена</text><text x="1229" y="399">Состояние</text><text x="1297" y="399">Время за</text></g>
<text y="419" style="fill:#333"><tspan x="946">CHD~US</tspan><tspan x="1022" style="fill:#e0182d">SELL</tspan><tspan x="1085">100</tspan><tspan x="1121">Stop</tspan><tspan x="1188">61.78</tspan><tspan x="1233" style="fill:#3f8ed0">Accepted</tspan><tspan x="1301">10:00:22</tspan></text>
<text y="436" style="fill:#333"><tspan x="946">EMR~US</tspan><tspan x="1022" style="fill:#2f6fb0">BUY</tspan><tspan x="1085">100</tspan><tspan x="1121">Stop</tspan><tspan x="1188">66.66</tspan><tspan x="1233" style="fill:#3f8ed0">Accepted</tspan><tspan x="1301">09:51:25</tspan></text>
<rect x="937" y="500" width="412" height="17" fill="#f1f1f1"/><rect x="955" y="500" width="352" height="17" fill="#ccc"/>
<path d="M949 504l-4 4.500 4 4.500M1337 504l4 4.500 -4 4.500" fill="none" stroke="#666" stroke-width="2.500"/>
<!-- Positions -->
<rect x="921" y="521" width="445" height="206" fill="#fff"/>
<use href="#radio" x="930" y="536"/>
<text x="945" y="544" style="fill:#444">Все позиции</text><text x="1028" y="544" style="font-weight:700;fill:#333">Открытые позиции</text>
<rect x="1150" y="527" width="92" height="19" rx="9" fill="#f0f0f0" stroke="#bbb" stroke-width="2"/><text x="1161" y="541" style="fill:#222">Закрыть все</text>
<rect x="1248" y="527" width="130" height="19" rx="9" fill="#f0f0f0" stroke="#bbb" stroke-width="2"/><text x="1259" y="541" style="fill:#222">Закрыть выбранно</text>
<rect x="1364" y="521" width="2" height="32" fill="#fff"/>
<rect x="921" y="551" width="445" height="1" fill="#e6e6e6"/>
<g class="h"><text x="942" y="571">Инструмен</text><text x="1012" y="571">Сред. цен</text><text x="1076" y="571">Размер по:</text><text x="1146" y="571">Кол-во</text><text x="1194" y="571">Потенциа</text></g>
<text x="1257" y="571" class="g" style="fill:#7aa80f" textLength="75" lengthAdjust="spacingAndGlyphs">Прибыль (Grc</text><path d="M1336 568h7l-3.500 -4z" fill="#6aa50f"/>
<text y="591" style="fill:#333"><tspan x="944">CHD~US</tspan><tspan x="1035">61.98</tspan><tspan x="1080" style="fill:#5b8fc8">Длинная</tspan></text>
<text y="608" style="fill:#333"><tspan x="944">EMR~US</tspan><tspan x="1035">66.51</tspan><tspan x="1080" style="fill:#e06060">Короткая</tspan></text>
<g text-anchor="end">
<text x="1180" y="591" class="b">100</text><text x="1180" y="608" class="r">-100</text>
<text x="1243" y="591" class="r">-5.00</text><text x="1243" y="608" class="b">34.00</text>
<text x="1339" y="591" class="r">-0.05</text><text x="1339" y="608" class="b">0.34</text>
</g>
<text x="947" y="720" class="h">Кол-во: <tspan style="font-weight:700;fill:#333">0</tspan></text>
<text x="1008" y="720" class="h" textLength="101" lengthAdjust="spacingAndGlyphs">Нереализованная:</text><text x="1112" y="720" style="font-weight:700;fill:#2f93dc" textLength="58" lengthAdjust="spacingAndGlyphs">29.00 USD</text>
<text x="1180" y="720" class="h" textLength="93" lengthAdjust="spacingAndGlyphs">Прибыль (Gross):</text><text x="1276" y="720" style="font-weight:700;fill:#2f93dc" textLength="52" lengthAdjust="spacingAndGlyphs">3.00 USD</text>
<text x="1338" y="720" class="h">Пр</text>
<rect x="1349" y="700" width="17" height="27" fill="#fff"/>
</svg>
</body></html>
